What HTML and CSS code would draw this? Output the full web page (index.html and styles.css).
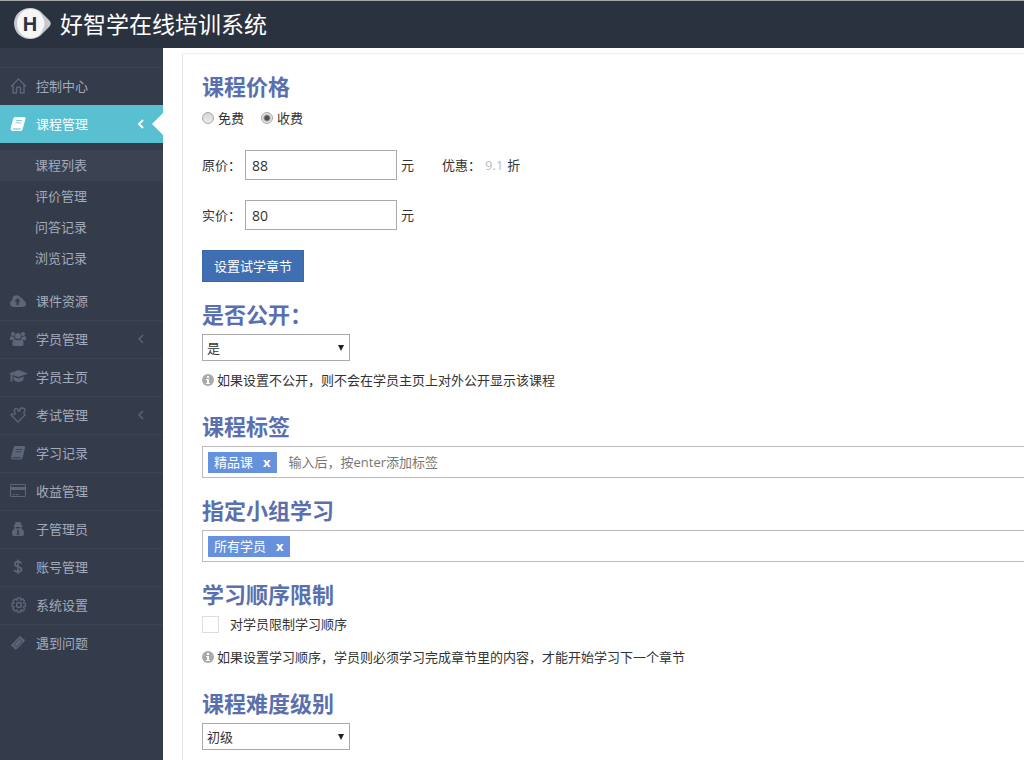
FILE: index.html
```
<!DOCTYPE html>
<html lang="zh-CN">
<head>
    <meta charset="utf-8">
    <title>好智学在线培训系统</title>
    <link rel="stylesheet" href="styles.css">
</head>
<body>
    <header class="header">
        <svg class="logo" viewBox="0 0 37 31" aria-hidden="true">
            <path d="M16 0C22 0 26 2.500 29 6L35.500 12.500Q38 15.500 35.500 18.500L29 25C26 28.500 22 31 16 31C7 31 0 24 0 15.500S7 0 16 0Z" fill="#c6c8cb"/>
            <path d="M17 1C23 1 26 4 28 8Q33 15.500 28 23C26 27 23 30 17 30C9 30 3 24 3 15.500S9 1 17 1Z" fill="#f6f6f6"/>
            <text x="16" y="23" text-anchor="middle" class="logo-letter">H</text>
        </svg>
        <h1>好智学在线培训系统</h1>
    </header>

    <div class="page">
        <nav class="sidebar">
            <ul class="menu">
                <li>
                    <a href="#">
                        <svg class="icon" viewBox="0 0 16 16"><path class="line" d="M1 8.500L8.500 1L16 8.500M3 7V15H6.500V10.500Q6.500 9 8.500 9T10.500 10.500V15H14V7"/></svg>
                        控制中心
                    </a>
                </li>
                <li class="active">
                    <a href="#">
                        <svg class="icon" viewBox="0 0 16 16"><path fill-rule="evenodd" d="M5 1H14.500Q16 1.500 15.500 3L12.500 13.500Q12 15 10.500 15H2.500Q.3 14.500.6 12L3.200 3Q3.700 1.200 5 1ZM6.200 4L6 4.800H12L12.200 4ZM5.500 6.500L5.300 7.300H11.200L11.400 6.500ZM2.500 12.500Q2 13.500 3.200 13.500H10.500L11 12.500Z"/></svg>
                        课程管理
                        <svg class="arrow" viewBox="0 0 6 10"><path class="line" d="M5 1L1 5L5 9"/></svg>
                    </a>
                    <ul class="submenu">
                        <li class="current"><a href="#">课程列表</a></li>
                        <li><a href="#">评价管理</a></li>
                        <li><a href="#">问答记录</a></li>
                        <li><a href="#">浏览记录</a></li>
                    </ul>
                </li>
                <li class="first">
                    <a href="#">
                        <svg class="icon" viewBox="0 0 16 16"><path fill-rule="evenodd" d="M4 14Q0 14 0 10.500Q0 8 2.300 7Q2 3 6 2.200Q9.500 2 10.700 5Q13.500 4.500 13.500 7.500Q16 8 16 10.800Q16 14 12.500 14ZM7.500 5L4.300 8.500H6.500V12H8.700V8.500H10.800Z"/></svg>
                        课件资源
                    </a>
                </li>
                <li>
                    <a href="#">
                        <svg class="icon" viewBox="0 0 16 16"><circle cx="3" cy="3" r="2"/><circle cx="13" cy="3" r="2"/><circle cx="8" cy="5" r="3"/><path d="M0 9V6.500Q0 5 1.500 5.200Q3 6 4.200 5.500Q4.300 7 5 8Q3.500 8.300 3 9ZM16 9V6.500Q16 5 14.500 5.200Q13 6 11.800 5.500Q11.700 7 11 8Q12.500 8.300 13 9ZM2.300 13Q2.300 8.500 5 8.500Q8 10 11 8.500Q13.700 8.500 13.700 13Q13.700 15 12 15H4Q2.300 15 2.300 13Z"/></svg>
                        学员管理
                        <svg class="arrow" viewBox="0 0 6 10"><path class="line" d="M5 1L1 5L5 9"/></svg>
                    </a>
                </li>
                <li>
                    <a href="#">
                        <svg class="icon wide" viewBox="0 0 19 16"><path d="M9.500 1L19 4.500L9.500 8L3.500 6V12.500H1.500V5.500L0 4.500ZM4.500 7.500L9.500 9.500L14.500 7.500V11Q12 13 9.500 13T4.500 11Z"/></svg>
                        学员主页
                    </a>
                </li>
                <li>
                    <a href="#">
                        <svg class="icon" viewBox="0 0 16 16"><path class="line" d="M8 15L1 8Q2 6.500 3.500 7.500Q5.500 8 5 5.500Q3.500 3 5.500 1.500Q7.500 1 8 3Q8 5 9.500 4Q9.500 1 12 1Q15.500 1 15 4Q13.500 5 14 6.500L15 8Z"/></svg>
                        考试管理
                        <svg class="arrow" viewBox="0 0 6 10"><path class="line" d="M5 1L1 5L5 9"/></svg>
                    </a>
                </li>
                <li>
                    <a href="#">
                        <svg class="icon" viewBox="0 0 16 16"><path fill-rule="evenodd" d="M5 1H14Q15.500 1.500 15 3L12.500 13Q12 14.500 10.500 14.500H2.500Q.8 14 1 12L3.500 3Q4 1.200 5 1ZM6.200 4L6 4.800H12L12.200 4ZM5.500 6.500L5.300 7.300H11.200L11.400 6.500ZM2.500 12.300Q2 13.200 3.200 13.200H10.500L11 12.300Z"/></svg>
                        学习记录
                    </a>
                </li>
                <li>
                    <a href="#">
                        <svg class="icon" viewBox="0 0 16 16"><path fill-rule="evenodd" d="M1.500 1H14.500Q16 1 16 2.500V12.500Q16 14 14.500 14H1.500Q0 14 0 12.500V2.500Q0 1 1.500 1ZM1 3V4H15V3L14.500 2H1.500ZM1 7V12.500L1.500 13H14.500L15 12.500V7ZM2.500 11H4.500V12H2.500ZM5.500 11H8.500V12H5.500Z"/></svg>
                        收益管理
                    </a>
                </li>
                <li>
                    <a href="#">
                        <svg class="icon" viewBox="0 0 16 16"><path fill-rule="evenodd" d="M4.500 4L5.500 1.500Q6.500.3 8 1.200Q9.500.3 10.500 1.500L11.500 4L13 5L11.500 6V7.500Q14 9 14 12.500Q14 15 12 15H4Q2 15 2 12.500Q2 9 4.500 7.500V6L3 5ZM5.500 6L6.500 7.500H9.500L10.500 6ZM6.500 9L7.500 10L6.500 14H7.500L8 11L8.500 14H9.500L8.500 10L9.500 9Z"/></svg>
                        子管理员
                    </a>
                </li>
                <li>
                    <a href="#">
                        <svg class="icon" viewBox="0 0 16 16"><path class="line dollar" d="M8 .5V15M11.500 4.500Q10.500 2.700 8 2.700Q4.800 2.700 4.800 5Q4.800 7 8 7.800Q11.500 8.500 11.500 10.500Q11.500 12.800 8 12.800Q5.200 12.800 4.200 11"/></svg>
                        账号管理
                    </a>
                </li>
                <li>
                    <a href="#">
                        <svg class="icon" viewBox="0 0 16 16"><path class="line" d="M7.500 1H10.500L11 3L12.500 2L14.600 4L13.500 6L15.500 6.500V9.500L13.500 10L14.600 12L12.500 14L11 13L10.500 15H7.500L7 13L5 14L3 12L4 10L2 9.500V6.500L4 6L3 4L5 2L7 3Z"/><circle class="line" cx="9" cy="8" r="2.500"/></svg>
                        系统设置
                    </a>
                </li>
                <li>
                    <a href="#">
                        <svg class="icon" viewBox="0 0 16 16"><path fill-rule="evenodd" d="M9.500 1.500Q10.500.8 11.500 1.800Q11.500 4 14 4Q15.500 5 14.500 6.200L6.500 14.200Q5.500 15 4.500 14Q4.500 11.800 2 11.800Q.7 10.700 1.500 9.500ZM9.500 3.500L3.500 9.500L6.500 12.500L12.500 6.500ZM9.500 4.300L11.700 6.500L6.500 11.700L4.300 9.500Z"/></svg>
                        遇到问题
                    </a>
                </li>
            </ul>
        </nav>

        <main class="content">
            <form class="panel">
                <h2 id="price">课程价格</h2>
                <div class="radios" role="radiogroup" aria-labelledby="price">
                    <label><input type="radio" name="charge" value="0">免费</label>
                    <label><input type="radio" name="charge" value="1" checked>收费</label>
                </div>
                <div class="price-row">
                    <label for="old-price">原价：</label>
                    <input type="text" id="old-price" value="88">
                    <span>元</span>
                    <span class="discount">优惠：</span>
                    <span class="rate">9.1</span>
                    <span>折</span>
                </div>
                <div class="price-row">
                    <label for="real-price">实价：</label>
                    <input type="text" id="real-price" value="80">
                    <span>元</span>
                </div>
                <button type="button" class="btn">设置试学章节</button>

                <h2><label for="public">是否公开：</label></h2>
                <div class="select">
                    <select id="public">
                        <option>是</option>
                        <option>否</option>
                    </select>
                </div>
                <p class="hint">
                    <svg viewBox="0 0 12 12" aria-hidden="true"><circle cx="6" cy="6" r="6"/><path d="M5 2H7V4H5ZM4 5H7V9H8V10H4V9H5V6H4Z"/></svg>
                    如果设置不公开，则不会在学员主页上对外公开显示该课程
                </p>

                <h2><label for="tags">课程标签</label></h2>
                <div class="tag-box">
                    <span class="tag">精品课<button type="button" aria-label="删除精品课">x</button></span>
                    <input type="text" id="tags" placeholder="输入后，按enter添加标签">
                </div>

                <h2><label for="groups">指定小组学习</label></h2>
                <div class="tag-box">
                    <span class="tag">所有学员<button type="button" aria-label="删除所有学员">x</button></span>
                    <input type="text" id="groups">
                </div>

                <h2>学习顺序限制</h2>
                <label class="check"><input type="checkbox">对学员限制学习顺序</label>
                <p class="hint">
                    <svg viewBox="0 0 12 12" aria-hidden="true"><circle cx="6" cy="6" r="6"/><path d="M5 2H7V4H5ZM4 5H7V9H8V10H4V9H5V6H4Z"/></svg>
                    如果设置学习顺序，学员则必须学习完成章节里的内容，才能开始学习下一个章节
                </p>

                <h2><label for="level">课程难度级别</label></h2>
                <div class="select">
                    <select id="level">
                        <option>初级</option>
                        <option>中级</option>
                        <option>高级</option>
                    </select>
                </div>
            </form>
        </main>
    </div>
</body>
</html>
```

FILE: styles.css
```
* {
    box-sizing: border-box;
}

body {
    margin: 0;
    min-height: 100vh;
    display: flex;
    flex-direction: column;
    font-family: "Open Sans", "Noto Sans CJK SC", sans-serif;
    font-size: 13px;
    line-height: 20px;
    color: #333;
    background-color: #fff;
}

input, select, button {
    font: inherit;
    color: inherit;
    margin: 0;
    border-radius: 0;
}

ul {
    list-style: none;
    margin: 0;
    padding: 0;
}

a {
    color: inherit;
    text-decoration: none;
}

/* header */
.header {
    display: flex;
    align-items: center;
    gap: 9px;
    height: 48px;
    padding: 0 0 2px 14px;
    border-top: 1px solid #a5a7a9;
    background-color: #2b323f;
}

.header h1 {
    margin: 0;
    font-size: 23px;
    font-weight: normal;
    line-height: 32px;
    color: #fff;
}

.logo {
    width: 37px;
    height: 31px;
}

.logo-letter {
    font-family: "Liberation Sans", sans-serif;
    font-size: 20px;
    font-weight: bold;
    fill: #2b323f;
}

.page {
    display: flex;
    flex: 1;
}

/* sidebar */
.sidebar {
    flex: none;
    width: 163px;
    padding-top: 19px;
    background-color: #343b4a;
    color: #a2abbd;
}

.menu > li > a {
    position: relative;
    display: flex;
    align-items: center;
    gap: 10px;
    height: 38px;
    padding: 0 19px 2px 10px;
    border-top: 1px solid #3b4453;
}

.menu > .first > a {
    border-top-color: transparent;
}

.menu > .active > a {
    border-top-color: #58c0d0;
    background-color: #58c0d0;
    color: #fff;
}

/* notch pointing at the content */
.menu > .active > a::after {
    content: "";
    position: absolute;
    right: 0;
    top: 7px;
    border: 11px solid transparent;
    border-left: 0;
    border-right-color: #fff;
}

.icon {
    flex: none;
    width: 16px;
    height: 16px;
    fill: #5b6678;
    stroke: #5b6678;
    stroke-width: 0;
}

.icon.wide {
    width: 19px;
    margin: 0 -2px 0 -1px;
}

.line {
    fill: none;
    stroke-width: 1.4;
}

.line.dollar {
    stroke-width: 1.7;
}

.arrow {
    width: 6px;
    height: 10px;
    margin-left: auto;
    stroke: #5b6678;
}

.active > a > .icon {
    fill: #fff;
}

.active > a > .arrow {
    stroke: #fff;
}

.active > a > .arrow .line {
    stroke-width: 2;
}

.submenu {
    padding: 7px 0 8px;
}

.submenu a {
    display: block;
    padding-left: 35px;
    line-height: 31px;
}

.submenu .current {
    background-color: #3b4353;
}

/* content */
.content {
    flex: 1;
    min-width: 0;
    padding: 5px 0 0 19px;
    overflow: hidden;
}

.panel {
    min-height: 100%;
    padding: 0 0 10px 19px;
    border-top: 1px solid #eef0f5;
    border-left: 1px solid #e3e7ee;
}

h2 {
    margin: 16px 0 4px;
    font-size: 22px;
    line-height: 32px;
    color: #5a70ae;
}

.radios {
    display: flex;
    gap: 17px;
    margin-bottom: 20px;
}

.radios label {
    display: flex;
    align-items: center;
    gap: 4px;
    line-height: 24px;
}

.radios input {
    appearance: none;
    width: 12px;
    height: 12px;
    border: 1px solid #a8a8a8;
    border-radius: 50%;
    background: linear-gradient(#d5d5d5, #ececec);
}

.radios input:checked {
    background: radial-gradient(circle, #505050 2px, #e4e4e4 4px);
}

.price-row {
    display: flex;
    align-items: center;
    gap: 4px;
    margin-bottom: 20px;
}

.price-row input {
    width: 152px;
    height: 30px;
    padding: 0 6px;
    border: 1px solid #aaa;
    font-size: 14px;
}

.discount {
    margin-left: 24px;
}

.rate {
    color: #bbb;
}

.btn {
    display: block;
    height: 32px;
    padding: 0 11px;
    border: 1px solid #3a68a8;
    background-color: #3f6fb2;
    color: #fff;
    cursor: pointer;
}

.select {
    position: relative;
    width: 148px;
}

.select select {
    display: block;
    appearance: none;
    width: 100%;
    height: 27px;
    padding: 0 4px;
    border: 1px solid #aaa;
    background-color: #fff;
}

.select::after {
    content: "";
    position: absolute;
    right: 6px;
    top: 11px;
    border: 3px solid transparent;
    border-top: 6px solid #222;
    border-bottom: 0;
    pointer-events: none;
}

.hint {
    display: flex;
    align-items: center;
    gap: 3px;
    margin: 9px 0 20px;
}

.hint svg {
    flex: none;
    width: 12px;
    height: 12px;
    fill: #aaa;
}

.hint path {
    fill: #fff;
}

.tag-box {
    display: flex;
    align-items: center;
    gap: 12px;
    height: 32px;
    padding-left: 5px;
    border: 1px solid #bbb;
    border-right: 0;
}

.tag-box input {
    flex: 1;
    min-width: 0;
    padding: 0;
    border: 0;
    outline: none;
}

.tag-box input::placeholder {
    color: #777;
}

.tag {
    display: flex;
    align-items: center;
    gap: 10px;
    height: 21px;
    padding: 0 6px;
    background-color: #6791dd;
    color: #fff;
}

.tag button {
    padding: 0;
    border: 0;
    background: none;
    font-weight: bold;
    cursor: pointer;
}

.check {
    display: flex;
    align-items: center;
    gap: 11px;
    margin-bottom: 13px;
}

.check input {
    appearance: none;
    width: 17px;
    height: 17px;
    border: 1px solid #ddd;
    background-color: #fff;
}

.check input:checked {
    background-color: #6791dd;
}
```
